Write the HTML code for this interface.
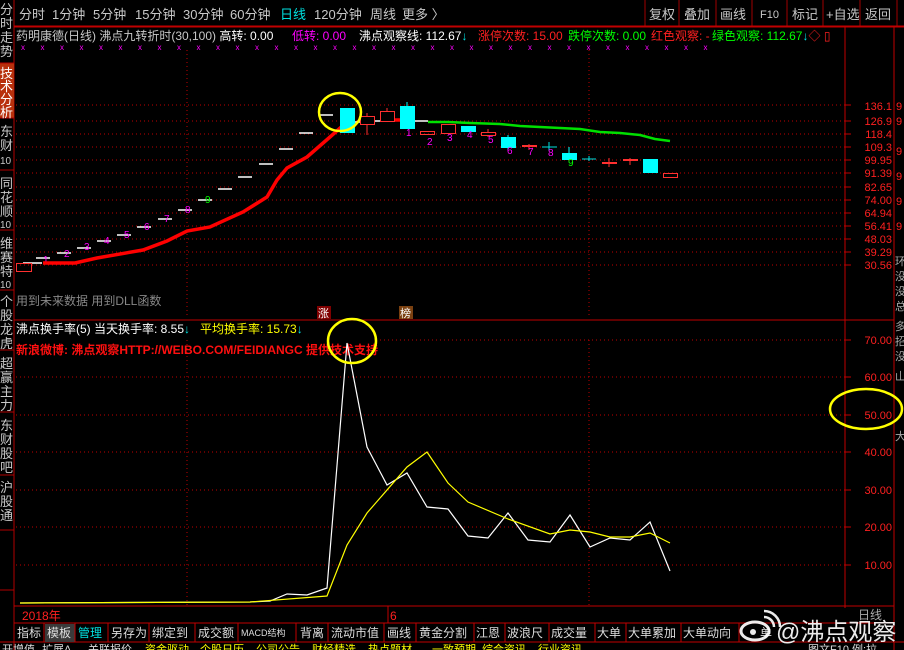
<!DOCTYPE html>
<html><head><meta charset="utf-8"><style>
html,body{margin:0;padding:0;background:#000;width:904px;height:650px;overflow:hidden}
svg{display:block}
text{font-family:"Liberation Sans","Noto Sans CJK SC","WenQuanYi Zen Hei",sans-serif}
</style></head><body>
<svg width="904" height="650" viewBox="0 0 904 650" xmlns="http://www.w3.org/2000/svg">
<rect width="904" height="650" fill="#000"/>
<g font-size="13" fill="#c8c8c8">
<text x="19" y="19">分时</text><text x="52" y="19">1分钟</text><text x="93" y="19">5分钟</text>
<text x="135" y="19">15分钟</text><text x="183" y="19">30分钟</text><text x="230" y="19">60分钟</text>
<text x="280" y="19" fill="#00e0e0">日线</text><text x="314" y="19">120分钟</text><text x="370" y="19">周线</text>
<text x="402" y="19">更多 〉</text>
</g>
<g stroke="#a00000" fill="none" stroke-width="1">
<line x1="645" y1="0" x2="645" y2="26"/><line x1="679" y1="0" x2="679" y2="26"/><line x1="716" y1="0" x2="716" y2="26"/>
<line x1="752" y1="0" x2="752" y2="26"/><line x1="787" y1="0" x2="787" y2="26"/><line x1="823" y1="0" x2="823" y2="26"/>
<line x1="860" y1="0" x2="860" y2="26"/><line x1="897" y1="0" x2="897" y2="26"/>
<line x1="14" y1="26" x2="904" y2="26" stroke="#c00000"/>
</g>
<g font-size="13" fill="#c8c8c8">
<text x="649" y="19">复权</text><text x="684" y="19">叠加</text><text x="720" y="19">画线</text>
<text x="760" y="18" font-size="11">F10</text><text x="792" y="19">标记</text><text x="826" y="19">+自选</text><text x="865" y="19">返回</text>
</g>
<g stroke="#b00000" fill="none"><line x1="14" y1="0" x2="14" y2="650"/></g>
<rect x="0" y="63" width="14" height="55" fill="#b8300c"/>
<g stroke="#b00000"><line x1="0" y1="63" x2="14" y2="63"/><line x1="0" y1="118" x2="14" y2="118"/><line x1="0" y1="170" x2="14" y2="170"/><line x1="0" y1="230" x2="14" y2="230"/><line x1="0" y1="290" x2="14" y2="290"/><line x1="0" y1="350" x2="14" y2="350"/><line x1="0" y1="412" x2="14" y2="412"/><line x1="0" y1="475" x2="14" y2="475"/><line x1="0" y1="530" x2="14" y2="530"/><line x1="0" y1="590" x2="14" y2="590"/></g>
<g font-size="13" fill="#c8c8c8">
<text x="0" y="14">分</text><text x="0" y="28">时</text><text x="0" y="42">走</text><text x="0" y="56">势</text>
<g fill="#fff"><text x="0" y="78">技</text><text x="0" y="91">术</text><text x="0" y="104">分</text><text x="0" y="117">析</text></g>
<text x="0" y="136">东</text><text x="0" y="150">财</text><text x="0" y="164" font-size="10">10</text>
<text x="0" y="188">同</text><text x="0" y="202">花</text><text x="0" y="216">顺</text><text x="0" y="228" font-size="10">10</text>
<text x="0" y="248">维</text><text x="0" y="262">赛</text><text x="0" y="276">特</text><text x="0" y="288" font-size="10">10</text>
<text x="0" y="306">个</text><text x="0" y="320">股</text><text x="0" y="334">龙</text><text x="0" y="348">虎</text>
<text x="0" y="368">超</text><text x="0" y="382">赢</text><text x="0" y="396">主</text><text x="0" y="410">力</text>
<text x="0" y="430">东</text><text x="0" y="444">财</text><text x="0" y="458">股</text><text x="0" y="472">吧</text>
<text x="0" y="492">沪</text><text x="0" y="506">股</text><text x="0" y="520">通</text>
</g>
<line x1="14" y1="27" x2="904" y2="27" stroke="#c00000"/>
<g font-size="12">
<text x="16" y="40" fill="#c8c8c8">药明康德(日线) 沸点九转折时(30,100) <tspan fill="#fff">高转: 0.00</tspan></text>
<text x="292" y="40" fill="#ff00ff">低转: 0.00</text>
<text x="359" y="40" fill="#fff">沸点观察线: 112.67<tspan fill="#00e0e0">↓</tspan></text>
<text x="478" y="40" fill="#ff2020">涨停次数: 15.00</text>
<text x="568" y="40" fill="#00ff00">跌停次数: 0.00</text>
<text x="651" y="40" fill="#ff2020">红色观察: -</text>
<text x="712" y="40" fill="#00ff00">绿色观察: 112.67<tspan fill="#00e0e0">↓</tspan><tspan fill="#ff2020">◇ ▯</tspan></text>
</g>
<g font-size="8" fill="#ff00ff">
<text x="21" y="50" letter-spacing="15.5">xxxxxxxxxxxxxxxxxxxxxxxxxxxxxxxxxxxx</text>
</g>
<g stroke="#c00000" stroke-dasharray="1,3" stroke-width="1">
<line x1="16" y1="105" x2="845" y2="105"/><line x1="16" y1="121" x2="845" y2="121"/><line x1="16" y1="134" x2="845" y2="134"/>
<line x1="16" y1="147" x2="845" y2="147"/><line x1="16" y1="160" x2="845" y2="160"/><line x1="16" y1="173" x2="845" y2="173"/>
<line x1="16" y1="187" x2="845" y2="187"/><line x1="16" y1="200" x2="845" y2="200"/><line x1="16" y1="213" x2="845" y2="213"/>
<line x1="16" y1="226" x2="845" y2="226"/><line x1="16" y1="239" x2="845" y2="239"/><line x1="16" y1="252" x2="845" y2="252"/>
<line x1="16" y1="265" x2="845" y2="265"/>
<line x1="187" y1="50" x2="187" y2="318"/><line x1="589" y1="50" x2="589" y2="318"/>
</g>
<line x1="845" y1="27" x2="845" y2="608" stroke="#c00000"/>
<line x1="894" y1="27" x2="894" y2="650" stroke="#c00000"/>
<g stroke="#c00000"><line x1="845" y1="105" x2="851" y2="105"/><line x1="845" y1="121" x2="851" y2="121"/><line x1="845" y1="134" x2="851" y2="134"/><line x1="845" y1="147" x2="851" y2="147"/><line x1="845" y1="160" x2="851" y2="160"/><line x1="845" y1="173" x2="851" y2="173"/><line x1="845" y1="187" x2="851" y2="187"/><line x1="845" y1="200" x2="851" y2="200"/><line x1="845" y1="213" x2="851" y2="213"/><line x1="845" y1="226" x2="851" y2="226"/><line x1="845" y1="239" x2="851" y2="239"/><line x1="845" y1="252" x2="851" y2="252"/><line x1="845" y1="265" x2="851" y2="265"/></g>
<g font-size="11" fill="#ff2020" text-anchor="end">
<text x="892" y="110">136.1</text><text x="892" y="125">126.9</text><text x="892" y="138">118.4</text><text x="892" y="151">109.3</text>
<text x="892" y="164">99.95</text><text x="892" y="177">91.39</text><text x="892" y="191">82.65</text><text x="892" y="204">74.00</text>
<text x="892" y="217">64.94</text><text x="892" y="230">56.41</text><text x="892" y="243">48.03</text><text x="892" y="256">39.29</text>
<text x="892" y="269">30.56</text>
</g>
<g font-size="11" fill="#ff2020"><text x="896" y="110">9</text><text x="896" y="125">9</text><text x="896" y="155">9</text><text x="896" y="180">9</text><text x="896" y="205">9</text><text x="896" y="230">9</text></g>
<g font-size="11" fill="#aaa"><text x="895" y="265">环</text><text x="895" y="280">没</text><text x="895" y="295">没</text><text x="895" y="310">总</text><text x="895" y="330">多</text><text x="895" y="345">招</text><text x="895" y="360">没</text><text x="895" y="380">山</text><text x="895" y="440">大</text></g>
<g stroke="#fff" stroke-width="1.5">
<line x1="23" y1="263" x2="42" y2="263"/><line x1="36" y1="258" x2="50" y2="258"/><line x1="57" y1="253" x2="71" y2="253"/>
<line x1="77" y1="248" x2="91" y2="248"/><line x1="97" y1="241" x2="111" y2="241"/><line x1="117" y1="235" x2="131" y2="235"/>
<line x1="137" y1="227" x2="151" y2="227"/><line x1="158" y1="219" x2="172" y2="219"/><line x1="178" y1="210" x2="192" y2="210"/>
<line x1="198" y1="200" x2="212" y2="200"/><line x1="218" y1="189" x2="232" y2="189"/><line x1="238" y1="177" x2="252" y2="177"/>
<line x1="259" y1="164" x2="273" y2="164"/><line x1="279" y1="149" x2="293" y2="149"/><line x1="299" y1="133" x2="313" y2="133"/>
<line x1="320" y1="115" x2="333" y2="115"/><line x1="350" y1="122" x2="372" y2="122"/><line x1="372" y1="121" x2="390" y2="121"/>
<line x1="413" y1="121" x2="428" y2="121"/>
</g>
<rect x="16.5" y="263.5" width="15" height="8" fill="none" stroke="#ff3030"/>
<g font-size="10" fill="#ff00ff">
<text x="43" y="263">1</text><text x="64" y="257">2</text><text x="84" y="250">3</text><text x="104" y="244">4</text><text x="124" y="238">5</text>
<text x="144" y="230">6</text><text x="164" y="222">7</text><text x="185" y="213">8</text><text x="205" y="203" fill="#00ff00">9</text>
</g>
<polyline points="43,263 75,263 97,258 143,250 167,241 187,231 210,227 243,212 267,197 277,180 287,168 307,157 330,137 348,121" fill="none" stroke="#ff0000" stroke-width="3.5"/>
<line x1="387" y1="120" x2="408" y2="120" stroke="#ff0000" stroke-width="3.5"/>
<polyline points="428,122 448,122 470,123 500,124 520,126 540,127 560,128 580,129 600,132 620,133 640,135 655,139 670,141" fill="none" stroke="#00e000" stroke-width="2.5"/>
<g>
<rect x="340" y="108" width="15" height="25" fill="#00ffff"/>
<line x1="367" y1="113" x2="367" y2="135" stroke="#ff3030"/><rect x="360.5" y="116.5" width="14" height="8" fill="#000" stroke="#ff3030"/>
<line x1="387" y1="108" x2="387" y2="122" stroke="#ff3030"/><rect x="380.5" y="111.5" width="14" height="10" fill="#000" stroke="#ff3030"/>
<line x1="407" y1="102" x2="407" y2="129" stroke="#00ffff"/><rect x="400" y="106" width="15" height="23" fill="#00ffff"/>
<rect x="420.5" y="131.5" width="14" height="3" fill="none" stroke="#ff3030"/>
<rect x="441.5" y="124.5" width="14" height="9" fill="none" stroke="#ff3030"/>
<rect x="461" y="126" width="15" height="6" fill="#00ffff"/>
<line x1="488" y1="129" x2="488" y2="137" stroke="#ff3030"/><rect x="481.5" y="132.5" width="14" height="3" fill="#000" stroke="#ff3030"/>
<line x1="508" y1="135" x2="508" y2="150" stroke="#00ffff"/><rect x="501" y="137" width="15" height="11" fill="#00ffff"/>
<rect x="522" y="145" width="15" height="2" fill="#ff3030"/><line x1="529" y1="144" x2="529" y2="150" stroke="#ff3030"/>
<line x1="542" y1="147" x2="557" y2="147" stroke="#00e0e0"/><line x1="549" y1="142" x2="549" y2="151" stroke="#00e0e0"/>
<line x1="569" y1="147" x2="569" y2="160" stroke="#00ffff"/><rect x="562" y="153" width="15" height="7" fill="#00ffff"/>
<line x1="582" y1="159" x2="596" y2="159" stroke="#00e0e0"/><line x1="589" y1="156" x2="589" y2="161" stroke="#00e0e0"/>
<rect x="602" y="162" width="15" height="2" fill="#ff3030"/><line x1="609" y1="158" x2="609" y2="167" stroke="#ff3030"/>
<rect x="623" y="159" width="15" height="2" fill="#ff3030"/><line x1="630" y1="158" x2="630" y2="165" stroke="#ff3030"/>
<rect x="643" y="159" width="15" height="14" fill="#00ffff"/>
<rect x="663.5" y="173.5" width="14" height="4" fill="none" stroke="#ff3030"/>
</g>
<g font-size="10" fill="#ff00ff">
<text x="406" y="136">1</text><text x="427" y="145">2</text><text x="447" y="141">3</text><text x="467" y="138">4</text><text x="488" y="143">5</text>
<text x="507" y="154">6</text><text x="528" y="155">7</text><text x="548" y="156">8</text><text x="568" y="166" fill="#00ff00">9</text>
</g>
<ellipse cx="340" cy="112" rx="21" ry="19" fill="none" stroke="#ffff00" stroke-width="2.5"/>
<text x="16" y="305" font-size="12" fill="#888">用到未来数据 用到DLL函数</text>
<rect x="317" y="306" width="14" height="13" fill="#800000"/><text x="318" y="317" font-size="11" fill="#fff">涨</text>
<rect x="399" y="306" width="14" height="13" fill="#7a4010"/><text x="400" y="317" font-size="11" fill="#fff">榜</text>
<line x1="14" y1="320" x2="894" y2="320" stroke="#c00000"/>
<g font-size="12">
<text x="16" y="333" fill="#fff">沸点换手率(5) 当天换手率: 8.55<tspan fill="#00e0e0">↓</tspan></text>
<text x="200" y="333" fill="#ffff00">平均换手率: 15.73<tspan fill="#00e0e0">↓</tspan></text>
<text x="16" y="354" fill="#ff1010" font-weight="bold">新浪微博: 沸点观察HTTP://WEIBO.COM/FEIDIANGC 提供技术支持</text>
</g>
<g stroke="#c00000" stroke-dasharray="1,3">
<line x1="16" y1="377" x2="845" y2="377"/><line x1="16" y1="415" x2="845" y2="415"/><line x1="16" y1="452" x2="845" y2="452"/>
<line x1="16" y1="490" x2="845" y2="490"/><line x1="16" y1="527" x2="845" y2="527"/><line x1="16" y1="565" x2="845" y2="565"/>
<line x1="380" y1="340" x2="845" y2="340"/>
<line x1="187" y1="340" x2="187" y2="605"/><line x1="589" y1="340" x2="589" y2="605"/>
</g>
<g stroke="#c00000"><line x1="845" y1="340" x2="851" y2="340"/><line x1="845" y1="377" x2="851" y2="377"/><line x1="845" y1="415" x2="851" y2="415"/><line x1="845" y1="452" x2="851" y2="452"/><line x1="845" y1="490" x2="851" y2="490"/><line x1="845" y1="527" x2="851" y2="527"/><line x1="845" y1="565" x2="851" y2="565"/></g>
<g font-size="11" fill="#ff2020" text-anchor="end">
<text x="892" y="344">70.00</text><text x="892" y="381">60.00</text><text x="892" y="419">50.00</text><text x="892" y="456">40.00</text>
<text x="892" y="494">30.00</text><text x="892" y="531">20.00</text><text x="892" y="569">10.00</text>
</g>
<polyline points="20,603 250,602 270,601 287,594 307,595 327,588 347,343 367,447 387,485 407,473 427,507 448,509 468,536 488,538 508,513 528,540 550,542 570,515 590,547 610,538 630,540 650,522 670,571" fill="none" stroke="#fff" stroke-width="1.2"/>
<polyline points="20,603 250,602 327,596 347,545 367,513 407,467 427,452 448,483 468,502 508,519 550,534 570,530 590,532 610,537 630,537 650,533 670,543" fill="none" stroke="#ffff00" stroke-width="1.2"/>
<ellipse cx="352" cy="341" rx="24" ry="22" fill="none" stroke="#ffff00" stroke-width="2.5"/>
<ellipse cx="866" cy="409" rx="36" ry="20" fill="none" stroke="#ffff00" stroke-width="2.5"/>
<line x1="14" y1="606" x2="894" y2="606" stroke="#c00000"/>
<line x1="388" y1="606" x2="388" y2="623" stroke="#c00000"/>
<text x="22" y="620" font-size="12" fill="#ff2020">2018年</text>
<text x="390" y="620" font-size="12" fill="#ff2020">6</text>
<text x="858" y="619" font-size="12" fill="#aaa">日线</text>
<line x1="14" y1="623" x2="894" y2="623" stroke="#c00000"/>
<line x1="0" y1="642" x2="904" y2="642" stroke="#c00000"/>
<rect x="45" y="624" width="30" height="18" fill="#3a3a3a"/>
<g stroke="#c00000">
<line x1="44" y1="623" x2="44" y2="642"/><line x1="75" y1="623" x2="75" y2="642"/><line x1="108" y1="623" x2="108" y2="642"/>
<line x1="149" y1="623" x2="149" y2="642"/><line x1="195" y1="623" x2="195" y2="642"/><line x1="238" y1="623" x2="238" y2="642"/>
<line x1="296" y1="623" x2="296" y2="642"/><line x1="328" y1="623" x2="328" y2="642"/><line x1="384" y1="623" x2="384" y2="642"/>
<line x1="416" y1="623" x2="416" y2="642"/><line x1="474" y1="623" x2="474" y2="642"/><line x1="505" y1="623" x2="505" y2="642"/>
<line x1="549" y1="623" x2="549" y2="642"/><line x1="595" y1="623" x2="595" y2="642"/><line x1="626" y1="623" x2="626" y2="642"/>
<line x1="681" y1="623" x2="681" y2="642"/><line x1="739" y1="623" x2="739" y2="642"/>
</g>
<g font-size="12" fill="#ddd">
<text x="17" y="637">指标</text><text x="47" y="637">模板</text><text x="78" y="637" fill="#00e0e0">管理</text><text x="111" y="637">另存为</text>
<text x="152" y="637">绑定到</text><text x="198" y="637">成交额</text><text x="241" y="636" font-size="9">MACD结构</text><text x="300" y="637">背离</text>
<text x="331" y="637">流动市值</text><text x="387" y="637">画线</text><text x="419" y="637">黄金分割</text><text x="476" y="637">江恩</text>
<text x="507" y="637">波浪尺</text><text x="551" y="637">成交量</text><text x="597" y="637">大单</text><text x="628" y="637">大单累加</text>
<text x="683" y="637">大单动向</text><text x="760" y="637">单</text>
</g>
<g font-size="11" fill="#ddd">
<text x="2" y="653">开增值</text><text x="42" y="653">扩展A</text><text x="88" y="653">关联报价</text>
<text x="145" y="653" fill="#ffff00">资金驱动</text><text x="200" y="653" fill="#ffff00">个股日历</text><text x="256" y="653" fill="#ffff00">公司公告</text>
<text x="312" y="653" fill="#ffff00">财经精选</text><text x="368" y="653" fill="#ffff00">热点题材</text><text x="432" y="653" fill="#ffff00">一致预期</text>
<text x="482" y="653" fill="#ffff00">综合资讯</text><text x="538" y="653" fill="#ffff00">行业资讯</text>
<text x="808" y="653">图文F10</text><text x="852" y="653">例:拉</text>
</g>
<g fill="#fff" opacity="0.92">
<ellipse cx="755" cy="631" rx="14" ry="9" fill="none" stroke="#fff" stroke-width="3"/>
<circle cx="753" cy="632" r="3" fill="#fff"/>
<path d="M764 617 a10 10 0 0 1 10 10" fill="none" stroke="#fff" stroke-width="2.5"/>
<path d="M764 611 a16 16 0 0 1 16 16" fill="none" stroke="#fff" stroke-width="2.5"/>
<text x="776" y="640" font-size="24" fill="#fff">@沸点观察</text>
</g>
</svg>
</body></html>
